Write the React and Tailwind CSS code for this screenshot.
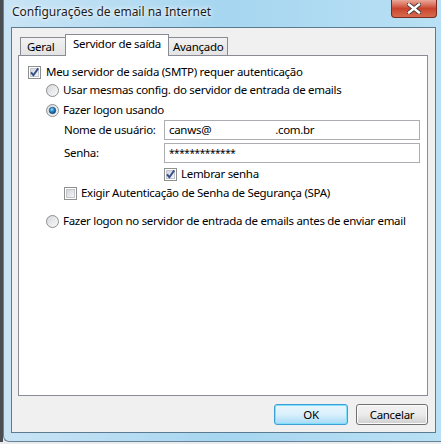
import React from 'react'

function CheckBox({ checked }) {
  return (
    <svg width="13" height="13" viewBox="0 0 13 13" className="shrink-0">
      <defs>
        <linearGradient id="cbFill" x1="0" y1="0" x2="1" y2="1">
          <stop offset="0" stopColor="#cfd3d9" />
          <stop offset="1" stopColor="#f7f7f7" />
        </linearGradient>
      </defs>
      <rect x="0.5" y="0.5" width="12" height="12" fill="#fff" stroke="#8e8f8f" />
      <rect x="2.5" y="2.5" width="8" height="8" fill="url(#cbFill)" stroke="#c3c7cd" />
      {checked && (
        <path d="M3 6.3 L5.4 9.2 L10.2 2.4" fill="none" stroke="#34508a" strokeWidth="1.9" />
      )}
    </svg>
  )
}

function Radio({ checked }) {
  return (
    <svg width="13" height="13" viewBox="0 0 13 13" className="shrink-0">
      <defs>
        <linearGradient id="rbFill" x1="0" y1="0" x2="1" y2="1">
          <stop offset="0" stopColor="#d4d6da" />
          <stop offset="1" stopColor="#fbfbfb" />
        </linearGradient>
        <radialGradient id="rbDot" cx="0.4" cy="0.35" r="0.7">
          <stop offset="0" stopColor="#8fe3ff" />
          <stop offset="0.45" stopColor="#2a86c6" />
          <stop offset="1" stopColor="#0c3f73" />
        </radialGradient>
      </defs>
      <circle cx="6.5" cy="6.5" r="6" fill="url(#rbFill)" stroke="#8e8f8f" />
      {checked && <circle cx="6.5" cy="6.5" r="3.3" fill="url(#rbDot)" stroke="#1a4f80" strokeWidth="0.6" />}
    </svg>
  )
}

export default function App() {
  return (
    <div className="w-[441px] h-[444px] bg-[#e8ecef] overflow-hidden text-[11.5px] tracking-[-0.3px] text-black leading-none whitespace-nowrap" style={{ fontFamily: '"Noto Sans", sans-serif' }}>
      <div className="flex h-[442px]">
        <div className="w-[3px] bg-[#4a4e52]" />
        <div className="flex-1 flex flex-col rounded-bl-[6px] bg-gradient-to-r from-[#c9e4f5] via-[#a6d6f0] to-[#b9e0f4] pl-[7px] pr-[5px] pb-[8px] border-l border-b border-[#6b8296]">
          <div className="h-[27px] flex items-start justify-between">
            <div className="pt-[6px] pl-[1px] text-[12px] tracking-normal text-[#1c1c1c] [text-shadow:0_0_6px_#ffffff,0_0_3px_#ffffff]">
              Configurações de email na Internet
            </div>
            <div className="w-[46px] h-[18px] -mr-px rounded-b-[4px] border border-t-0 border-[#7a2a20] bg-gradient-to-b from-[#e9a89a] via-[#c9432c] to-[#d86a4e] flex items-center justify-center">
              <svg width="14" height="11" viewBox="0 0 14 11">
                <path d="M2 1.5 L12 9.5 M12 1.5 L2 9.5" stroke="#3a3a3a" strokeWidth="4.2" strokeLinecap="square" />
                <path d="M2 1.5 L12 9.5 M12 1.5 L2 9.5" stroke="#ffffff" strokeWidth="2.4" strokeLinecap="square" />
              </svg>
            </div>
          </div>

          <div className="flex-1 flex flex-col border border-[#5d7b90] bg-[#f0f0f0]">
            <div className="flex items-end h-[21px] mt-[6px] ml-[8px]">
              <div className="w-[46px] h-[18px] border border-b-0 border-[#898c95] bg-gradient-to-b from-[#f2f2f2] to-[#e3e3e3] pl-[6px] pt-[3px]">
                Geral
              </div>
              <div className="relative z-10 -mb-px w-[104px] h-[22px] -ml-px border border-b-0 border-[#898c95] bg-white pl-[7px] pt-[3px]">
                Servidor de saída
              </div>
              <div className="w-[60px] h-[18px] -ml-px border border-b-0 border-[#898c95] bg-gradient-to-b from-[#f2f2f2] to-[#e3e3e3] pl-[4px] pt-[3px]">
                Avançado
              </div>
            </div>

            <div className="ml-[6px] w-[410px] h-[341px] border border-[#898c95] bg-white pt-[7px] pl-[9px] flex flex-col">
              <div className="h-[18px] flex items-center gap-[5px]">
                <CheckBox checked />
                <span>Meu servidor de saída (SMTP) requer autenticação</span>
              </div>
              <div className="h-[18px] flex items-center gap-[4px] pl-[18px]">
                <Radio />
                <span>Usar mesmas config. do servidor de entrada de emails</span>
              </div>
              <div className="h-[18px] mt-[2px] flex items-center gap-[4px] pl-[18px]">
                <Radio checked />
                <span>Fazer logon usando</span>
              </div>
              <div className="h-[20px] mt-[1px] flex items-center pl-[36px]">
                <span className="w-[100px]">Nome de usuário:</span>
                <div className="w-[256px] h-[20px] border border-[#abadb3] bg-white flex items-center pl-[4px]">
                  <span>canws@</span>
                  <span className="ml-[64px]">.com.br</span>
                </div>
              </div>
              <div className="h-[20px] mt-[3px] flex items-center pl-[36px]">
                <span className="w-[100px]">Senha:</span>
                <div className="w-[256px] h-[20px] border border-[#abadb3] bg-white flex items-center pl-[4px] text-[10px] tracking-[-0.4px]">
                  *************
                </div>
              </div>
              <div className="h-[18px] mt-[2px] flex items-center gap-[4px] pl-[136px]">
                <CheckBox checked />
                <span>Lembrar senha</span>
              </div>
              <div className="h-[18px] mt-px flex items-center gap-[4px] pl-[36px]">
                <CheckBox />
                <span>Exigir Autenticação de Senha de Segurança (SPA)</span>
              </div>
              <div className="h-[18px] mt-[10px] flex items-center gap-[4px] pl-[18px]">
                <Radio />
                <span>Fazer logon no servidor de entrada de emails antes de enviar email</span>
              </div>
            </div>

            <div className="flex justify-end gap-[8px] pr-[7px] mt-[8px]">
              <button className="w-[74px] h-[21px] rounded-[3px] border border-[#3c9fd6] bg-gradient-to-b from-[#eaf6fd] via-[#d9f0fc] to-[#a7d9f5] shadow-[inset_0_0_0_1px_#7fe0fb] leading-none">
                OK
              </button>
              <button className="w-[72px] h-[21px] rounded-[3px] border border-[#707070] bg-gradient-to-b from-[#f2f2f2] via-[#ebebeb] to-[#cfcfcf] shadow-[inset_0_0_0_1px_#fcfcfc] leading-none">
                Cancelar
              </button>
            </div>
          </div>
        </div>
      </div>
    </div>
  )
}
